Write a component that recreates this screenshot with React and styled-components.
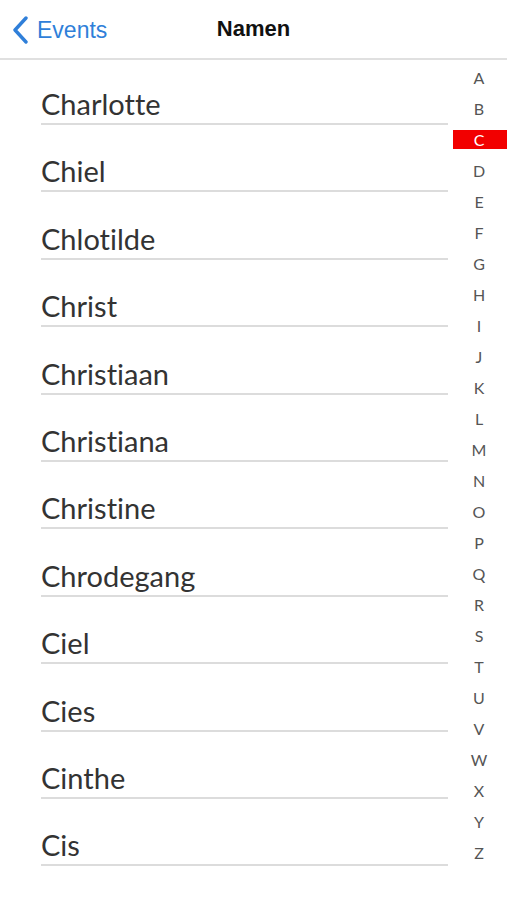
import React from "react";
import styled, { createGlobalStyle } from "styled-components";

const names = [
    "Charlotte",
    "Chiel",
    "Chlotilde",
    "Christ",
    "Christiaan",
    "Christiana",
    "Christine",
    "Chrodegang",
    "Ciel",
    "Cies",
    "Cinthe",
    "Cis",
];

const letters = "ABCDEFGHIJKLMNOPQRSTUVWXYZ".split("");

function App() {
    return (
        <Page>
            <GlobalStyle />
            <NavBar>
                <BackButton>
                    <svg width="18" height="28" viewBox="0 0 18 28">
                        <path
                            d="M15 2 L4 14 L15 26"
                            fill="none"
                            stroke="#2f7fd9"
                            strokeWidth="3.4"
                            strokeLinecap="round"
                            strokeLinejoin="round"
                        />
                    </svg>
                    <BackLabel>Events</BackLabel>
                </BackButton>
                <Title>Namen</Title>
            </NavBar>
            <Body>
                <List>
                    {names.map((name) => (
                        <Row key={name}>{name}</Row>
                    ))}
                </List>
                <Index>
                    {letters.map((letter) => (
                        <IndexCell key={letter}>
                            <IndexLetter active={letter === "C"}>{letter}</IndexLetter>
                        </IndexCell>
                    ))}
                </Index>
            </Body>
        </Page>
    );
}

export default App;

const GlobalStyle = createGlobalStyle`
    body {
        margin: 0;
        background: #ffffff;
    }
`;

const Page = styled.div`
    width: 507px;
    height: 900px;
    overflow: hidden;
    background: #ffffff;
`;

const NavBar = styled.div`
    position: relative;
    height: 58px;
    border-bottom: 2px solid #e0e0e0;
    display: flex;
    align-items: center;
    justify-content: center;
`;

const BackButton = styled.div`
    position: absolute;
    left: 11px;
    top: 16px;
    display: flex;
    align-items: center;
    gap: 8px;
`;

const BackLabel = styled.span`
    font-family: "Liberation Sans", Arial, sans-serif;
    font-size: 23px;
    color: #2f7fd9;
`;

const Title = styled.h1`
    margin: 0;
    font-family: "Liberation Sans", Arial, sans-serif;
    font-size: 22px;
    font-weight: bold;
    color: #111111;
`;

const Body = styled.div`
    display: flex;
`;

const List = styled.div`
    flex: 1;
    padding-left: 41px;
    margin-top: -2.4px;
`;

const Row = styled.div`
    height: 67.4px;
    box-sizing: border-box;
    border-bottom: 2px solid #dcdcdc;
    display: flex;
    align-items: flex-end;
    padding-bottom: 2px;
    font-family: Lato, "Open Sans", sans-serif;
    font-size: 29px;
    font-variant-ligatures: none;
    color: #333333;
`;

const Index = styled.div`
    width: 59px;
    padding-top: 1.5px;
    display: flex;
    flex-direction: column;
`;

const IndexCell = styled.div`
    height: 31.02px;
    display: flex;
    align-items: center;
    justify-content: flex-end;
`;

const IndexLetter = styled.span`
    width: 54px;
    height: 19px;
    line-height: 19px;
    padding-right: 2px;
    box-sizing: border-box;
    text-align: center;
    font-family: Lato, "Open Sans", sans-serif;
    font-size: 16px;
    color: ${(props) => (props.active ? "#ffffff" : "#555555")};
    background: ${(props) => (props.active ? "#f20000" : "transparent")};
`;
